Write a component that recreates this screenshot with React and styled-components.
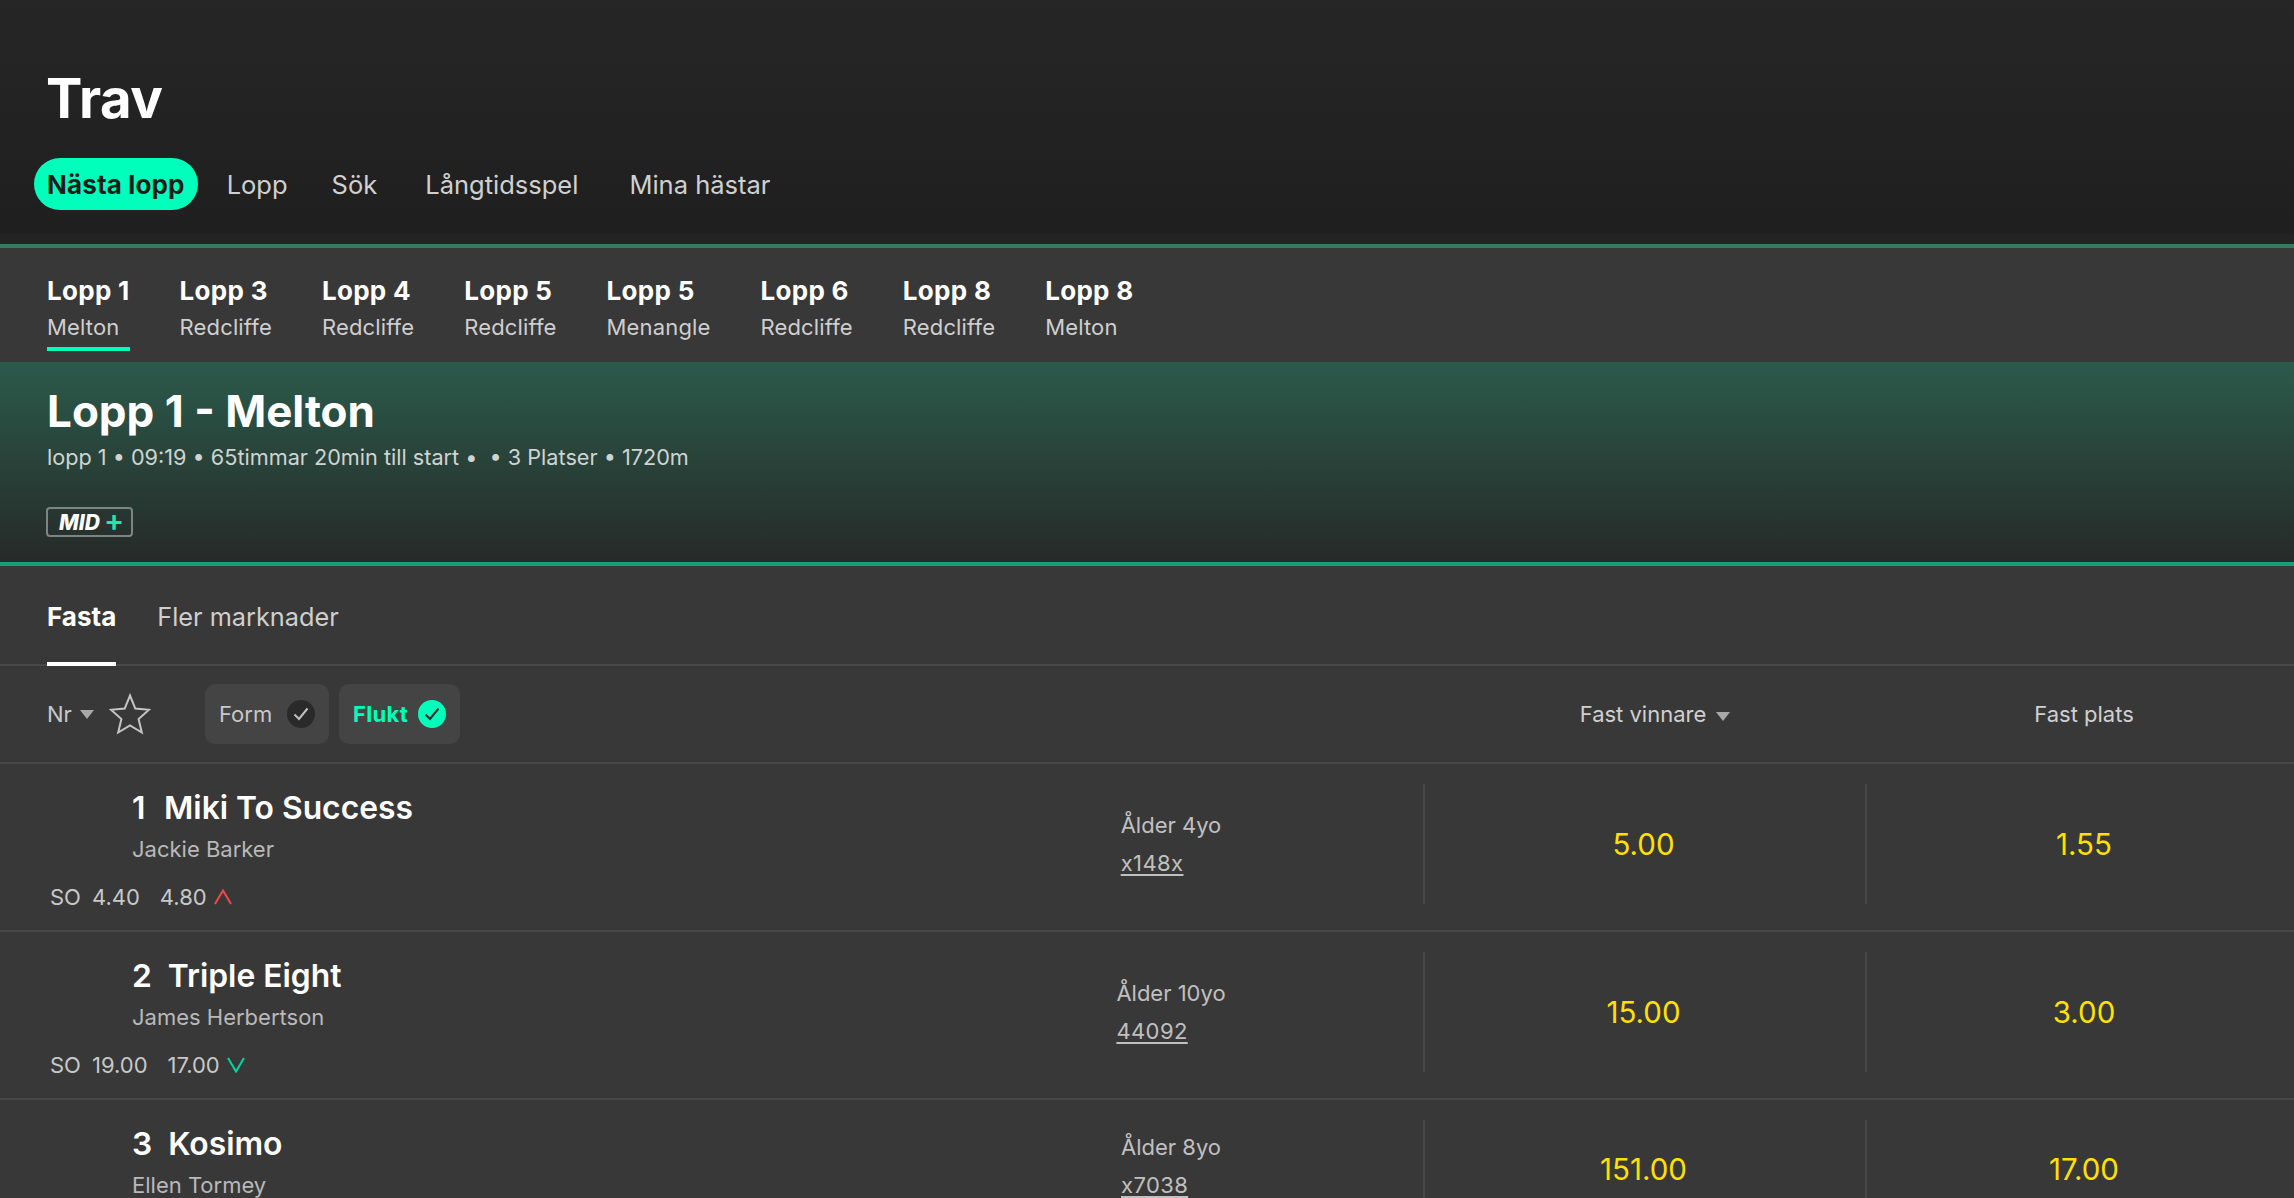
import React from 'react';
import styled, { createGlobalStyle } from 'styled-components';

const GlobalStyle = createGlobalStyle`
  html, body {
    margin: 0;
    padding: 0;
    background: #383838;
    overflow: hidden;
  }
  * { box-sizing: border-box; }
  body {
    font-family: Inter, "Noto Sans", "Liberation Sans", sans-serif;
    color: #cfcfcf;
  }
`;

const Page = styled.div`
  width: 2294px;
  height: 1198px;
  overflow: hidden;
  background: #383838;
`;

const Header = styled.header`
  height: 234px;
  padding: 66px 34px 0;
  background: linear-gradient(180deg, #262626 0%, #1f1f1f 100%);
`;

const PageTitle = styled.h1`
  margin: 0 0 28px 12px;
  font-size: 54.5px;
  line-height: 64px;
  font-weight: 700;
  letter-spacing: -0.4px;
  color: #fff;
`;

const Nav = styled.nav`
  display: flex;
  align-items: center;
  height: 52px;
`;

const NavItem = styled.a`
  display: flex;
  align-items: center;
  height: 52px;
  padding: 0 13px;
  margin-right: ${p => p.$gap}px;
  border-radius: 26px;
  font-size: ${p => (p.$active ? 26 : 25.5)}px;
  letter-spacing: ${p => (p.$active ? 0.15 : 0)}px;
  font-weight: ${p => (p.$active ? 700 : 400)};
  color: ${p => (p.$active ? '#1c1c1c' : '#d0d0d0')};
  background: ${p => (p.$active ? '#00ffbb' : 'transparent')};
  white-space: nowrap;
`;

const HeaderGap = styled.div`
  height: 10px;
  background: #232323;
`;

const RaceBar = styled.div`
  display: flex;
  gap: 50px;
  height: 118px;
  padding: 27px 47px 0;
  border-top: 4px solid #377a62;
  background: #383838;
`;

const RaceLink = styled.a`
  display: flex;
  flex-direction: column;
  height: 76px;
  border-bottom: 4px solid ${p => (p.$active ? '#00ffbb' : 'transparent')};
`;

const RaceName = styled.span`
  font-size: 26px;
  line-height: 32px;
  font-weight: 700;
  letter-spacing: 0.3px;
  color: #fff;
  white-space: nowrap;
`;

const RaceTrack = styled.span`
  margin-top: 6px;
  font-size: 22px;
  line-height: 28px;
  letter-spacing: 0.15px;
  color: #cfcfcf;
  white-space: nowrap;
`;

const RaceHero = styled.section`
  height: 204px;
  padding: 22px 47px 0;
  border-bottom: 4px solid #17a077;
  background: linear-gradient(180deg, #2b5a4b 0%, #262a28 100%);
`;

const HeroTitle = styled.h2`
  margin: 0;
  font-size: 44px;
  line-height: 54px;
  font-weight: 700;
  color: #fff;
`;

const HeroMeta = styled.p`
  margin: 4px 0 0;
  font-size: 21.65px;
  line-height: 30px;
  color: #cfd4d2;
  white-space: pre;
`;

const MidBadge = styled.div`
  display: inline-flex;
  align-items: center;
  gap: 4px;
  width: 87px;
  height: 30px;
  margin: 35px 0 0 -1px;
  padding-left: 11px;
  border: 2px solid #7d8583;
  border-radius: 4px;
  font-size: 21px;
  font-weight: 800;
  font-style: italic;
  color: #fff;
`;

const MidPlus = styled.span`
  padding-bottom: 4px;
  color: #1fe8a8;
  font-style: normal;
  font-weight: 600;
  font-size: 30px;
  line-height: 26px;
`;

const Tabs = styled.div`
  display: flex;
  gap: 41px;
  height: 100px;
  padding: 0 47px;
  border-bottom: 2px solid #484848;
`;

const Tab = styled.a`
  display: flex;
  align-items: center;
  height: 100px;
  padding-top: 4px;
  border-bottom: 4px solid ${p => (p.$active ? '#fff' : 'transparent')};
  font-size: ${p => (p.$active ? 26 : 25.3)}px;
  font-weight: ${p => (p.$active ? 700 : 400)};
  color: ${p => (p.$active ? '#fff' : '#cfcfcf')};
`;

const Toolbar = styled.div`
  display: flex;
  align-items: center;
  height: 98px;
  border-bottom: 2px solid #484848;
`;

const SortGroup = styled.div`
  display: flex;
  align-items: center;
  width: 205px;
  padding-left: 47px;
`;

const SortLabel = styled.span`
  font-size: 22px;
  color: #c8c8c8;
`;

const Caret = styled.svg`
  display: block;
  width: 14px;
  height: 9px;
  margin-left: ${p => p.$gap}px;
  margin-top: ${p => p.$drop || 0}px;
  fill: #a8a8a8;
`;

const StarIcon = styled.svg`
  display: block;
  width: 42px;
  height: 42px;
  margin-left: 15px;
  fill: none;
  stroke: #c4c4c4;
  stroke-width: 2;
`;

const Chips = styled.div`
  display: flex;
  gap: 10px;
  width: 1219px;
`;

const Chip = styled.button`
  display: flex;
  align-items: center;
  justify-content: space-between;
  width: ${p => p.$width}px;
  height: 60px;
  padding: 0 14px 0 14px;
  border: 0;
  border-radius: 10px;
  background: #444;
  font-family: inherit;
  font-size: 22px;
  letter-spacing: ${p => (p.$on ? 0.35 : 0)}px;
  font-weight: ${p => (p.$on ? 700 : 400)};
  color: ${p => (p.$on ? '#00ffbb' : '#c8c8c8')};
`;

const CheckDot = styled.span`
  display: flex;
  align-items: center;
  justify-content: center;
  width: 28px;
  height: 28px;
  border-radius: 50%;
  background: ${p => (p.$on ? '#00ffbb' : '#2a2a2a')};
  color: ${p => (p.$on ? '#262626' : '#c0c0c0')};
`;

const ColumnHead = styled.div`
  display: flex;
  align-items: center;
  justify-content: center;
  width: ${p => p.$width}px;
  padding-left: ${p => p.$inset}px;
  font-size: 22px;
  color: #d0d0d0;
`;

const Row = styled.div`
  display: flex;
  height: ${p => p.$height}px;
  border-bottom: 2px solid #484848;
`;

const Info = styled.div`
  flex: 1;
  padding-top: 24px;
`;

const HorseName = styled.div`
  display: flex;
  padding-left: 132px;
  font-size: 31.8px;
  line-height: 40px;
  font-weight: 600;
  color: #fff;
  white-space: pre;
`;

const HorseNumber = styled.span`
  min-width: 16px;
  margin-right: 16px;
`;

const Jockey = styled.div`
  margin-top: 7px;
  padding-left: 132px;
  font-size: 22px;
  line-height: 28px;
  color: #b9b9b9;
`;

const PriceLine = styled.div`
  display: flex;
  align-items: center;
  margin-top: 20px;
  padding-left: 50px;
  font-size: 22px;
  line-height: 28px;
  color: #c8c8c8;
`;

const PriceNow = styled.span`
  margin-left: 11px;
`;

const PriceOld = styled.span`
  margin-left: 20px;
`;

const Trend = styled.svg`
  display: block;
  width: 18px;
  height: 16px;
  margin-left: 7px;
  fill: none;
  stroke: ${p => (p.$up ? '#f24848' : '#00d8a0')};
  stroke-width: 2;
`;

const AgeCell = styled.div`
  display: flex;
  justify-content: center;
  width: 504px;
  padding-top: ${p => p.$top}px;
`;

const AgeStack = styled.div`
  display: flex;
  flex-direction: column;
  align-items: flex-start;
  height: max-content;
  font-size: 22px;
  line-height: 28px;
  color: #c0c0c0;
`;

const FormLink = styled.a`
  margin-top: 10px;
  letter-spacing: 0.4px;
  text-decoration: underline;
  text-underline-offset: 3px;
`;

const OddsCell = styled.div`
  display: flex;
  align-items: center;
  justify-content: center;
  width: ${p => p.$width}px;
  height: ${p => p.$height}px;
  margin-top: 20px;
  padding-left: ${p => p.$inset || 0}px;
  padding-right: ${p => p.$trim || 0}px;
  border-left: 2px solid #484848;
  font-size: 29.5px;
  color: #ffe100;
`;

const Check = () => (
  <svg width="16" height="14" viewBox="0 0 16 14" fill="none" stroke="currentColor" strokeWidth="2">
    <path d="M1.5 7.5 L6 12 L14.5 1.5" />
  </svg>
);

const races = [
  ['Lopp 1', 'Melton'],
  ['Lopp 3', 'Redcliffe'],
  ['Lopp 4', 'Redcliffe'],
  ['Lopp 5', 'Redcliffe'],
  ['Lopp 5', 'Menangle'],
  ['Lopp 6', 'Redcliffe'],
  ['Lopp 8', 'Redcliffe'],
  ['Lopp 8', 'Melton'],
];

const runners = [
  { nr: 1, name: 'Miki To Success', jockey: 'Jackie Barker', so: '4.40', old: '4.80', up: true, age: '4yo', form: 'x148x', win: '5.00', place: '1.55' },
  { nr: 2, name: 'Triple Eight', jockey: 'James Herbertson', so: '19.00', old: '17.00', up: false, age: '10yo', form: '44092', win: '15.00', place: '3.00' },
  { nr: 3, name: 'Kosimo', jockey: 'Ellen Tormey', age: '8yo', form: 'x7038', win: '151.00', place: '17.00' },
];

const App = () => (
  <Page>
    <GlobalStyle />
    <Header>
      <PageTitle>Trav</PageTitle>
      <Nav>
        <NavItem $active $gap={16}>Nästa lopp</NavItem>
        <NavItem $gap={18}>Lopp</NavItem>
        <NavItem $gap={22}>Sök</NavItem>
        <NavItem $gap={25}>Långtidsspel</NavItem>
        <NavItem>Mina hästar</NavItem>
      </Nav>
    </Header>
    <HeaderGap />
    <RaceBar>
      {races.map(([name, track], i) => (
        <RaceLink key={i} $active={i === 0}>
          <RaceName>{name}</RaceName>
          <RaceTrack>{track}</RaceTrack>
        </RaceLink>
      ))}
    </RaceBar>
    <RaceHero>
      <HeroTitle>Lopp 1 - Melton</HeroTitle>
      <HeroMeta>lopp 1 • 09:19 • 65timmar 20min till start •  • 3 Platser • 1720m</HeroMeta>
      <MidBadge>MID<MidPlus>+</MidPlus></MidBadge>
    </RaceHero>
    <Tabs>
      <Tab $active>Fasta</Tab>
      <Tab>Fler marknader</Tab>
    </Tabs>
    <Toolbar>
      <SortGroup>
        <SortLabel>Nr</SortLabel>
        <Caret $gap={8} viewBox="0 0 14 9"><path d="M0 0 H14 L7 9 Z" /></Caret>
        <StarIcon viewBox="0 0 42 42">
          <path d="M21 2.5 L26.3 15.6 L40 16.8 L29.6 26 L32.8 39.5 L21 32.3 L9.2 39.5 L12.4 26 L2 16.8 L15.7 15.6 Z" />
        </StarIcon>
      </SortGroup>
      <Chips>
        <Chip $width={124}>Form<CheckDot><Check /></CheckDot></Chip>
        <Chip $width={121} $on>Flukt<CheckDot $on><Check /></CheckDot></Chip>
      </Chips>
      <ColumnHead $width={441} $inset={21}>
        Fast vinnare
        <Caret $gap={10} $drop={5} viewBox="0 0 14 9"><path d="M0 0 H14 L7 9 Z" /></Caret>
      </ColumnHead>
      <ColumnHead $width={429} $inset={9}>Fast plats</ColumnHead>
    </Toolbar>
    {runners.map(r => {
      const tall = Boolean(r.so);
      const height = tall ? 168 : 140;
      const cellHeight = tall ? 120 : 98;
      return (
        <Row key={r.nr} $height={height}>
          <Info>
            <HorseName><HorseNumber>{r.nr}</HorseNumber>{r.name}</HorseName>
            <Jockey>{r.jockey}</Jockey>
            {tall && (
              <PriceLine>
                SO
                <PriceNow>{r.so}</PriceNow>
                <PriceOld>{r.old}</PriceOld>
                <Trend $up={r.up} viewBox="0 0 18 16">
                  <path d={r.up ? 'M1 15 L9 1.5 L17 15' : 'M1 1 L9 14.5 L17 1'} />
                </Trend>
              </PriceLine>
            )}
          </Info>
          <AgeCell $top={tall ? 47 : 33}>
            <AgeStack>
              <span>Ålder {r.age}</span>
              <FormLink>{r.form}</FormLink>
            </AgeStack>
          </AgeCell>
          <OddsCell $width={442} $trim={3} $height={cellHeight}>{r.win}</OddsCell>
          <OddsCell $width={429} $inset={7} $height={cellHeight}>{r.place}</OddsCell>
        </Row>
      );
    })}
  </Page>
);

export default App;
